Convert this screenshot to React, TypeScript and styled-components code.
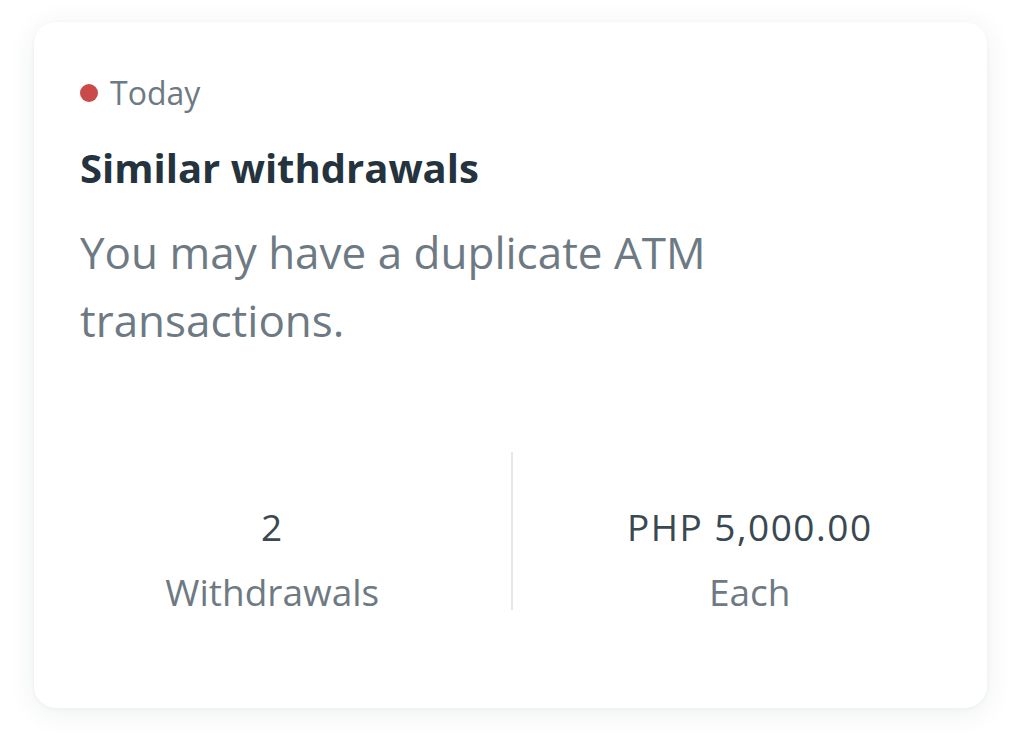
import React, { FC } from 'react';
import styled, { createGlobalStyle } from 'styled-components';

const GlobalStyle = createGlobalStyle`
  html, body {
    margin: 0;
    padding: 0;
    background: #ffffff;
  }
  body {
    font-family: "Open Sans", Lato, sans-serif;
  }
`;

const Page = styled.div`
  width: 1024px;
  height: 739px;
  box-sizing: border-box;
  padding: 22px 37px 31px 34px;
  background: #ffffff;
`;

const Card = styled.div`
  box-sizing: border-box;
  height: 686px;
  background: #ffffff;
  border-radius: 22px;
  box-shadow: 0 4px 28px rgba(30, 45, 60, 0.08), 0 1px 4px rgba(30, 45, 60, 0.04);
  padding: 56px 46px 0 46px;
  display: flex;
  flex-direction: column;
`;

const DateRow = styled.div`
  display: flex;
  align-items: center;
  gap: 12px;
  height: 30px;
`;

const Dot = styled.span`
  width: 18px;
  height: 18px;
  border-radius: 50%;
  background: #c94a48;
  flex-shrink: 0;
`;

const DateText = styled.span`
  font-size: 32px;
  color: #6d7a83;
  line-height: 30px;
`;

const Title = styled.h2`
  margin: 36px 0 0 0;
  font-size: 40px;
  font-weight: 700;
  color: #24333d;
  line-height: 48px;
`;

const Description = styled.p`
  margin: 26px 0 0 0;
  font-size: 44px;
  color: #6d7a83;
  line-height: 68px;
  max-width: 680px;
`;

const Stats = styled.div`
  display: grid;
  grid-template-columns: 1fr 1fr;
  margin: 98px -46px 0 -46px;
  height: 158px;
`;

const Stat = styled.div<{ $divider?: boolean }>`
  display: flex;
  flex-direction: column;
  align-items: center;
  justify-content: flex-end;
  gap: 23px;
  border-left: ${(p) => (p.$divider ? '2px solid #e4e8ea' : 'none')};
`;

const Value = styled.div`
  font-size: 37px;
  letter-spacing: 1.5px;
  color: #3a4852;
  line-height: 48px;
`;

const Label = styled.div`
  font-size: 37px;
  color: #6d7a83;
  line-height: 36px;
`;

const App: FC = () => (
  <>
    <GlobalStyle />
    <Page>
      <Card>
        <DateRow>
          <Dot />
          <DateText>Today</DateText>
        </DateRow>
        <Title>Similar withdrawals</Title>
        <Description>You may have a duplicate ATM transactions.</Description>
        <Stats>
          <Stat>
            <Value>2</Value>
            <Label>Withdrawals</Label>
          </Stat>
          <Stat $divider>
            <Value>PHP 5,000.00</Value>
            <Label>Each</Label>
          </Stat>
        </Stats>
      </Card>
    </Page>
  </>
);

export default App;
